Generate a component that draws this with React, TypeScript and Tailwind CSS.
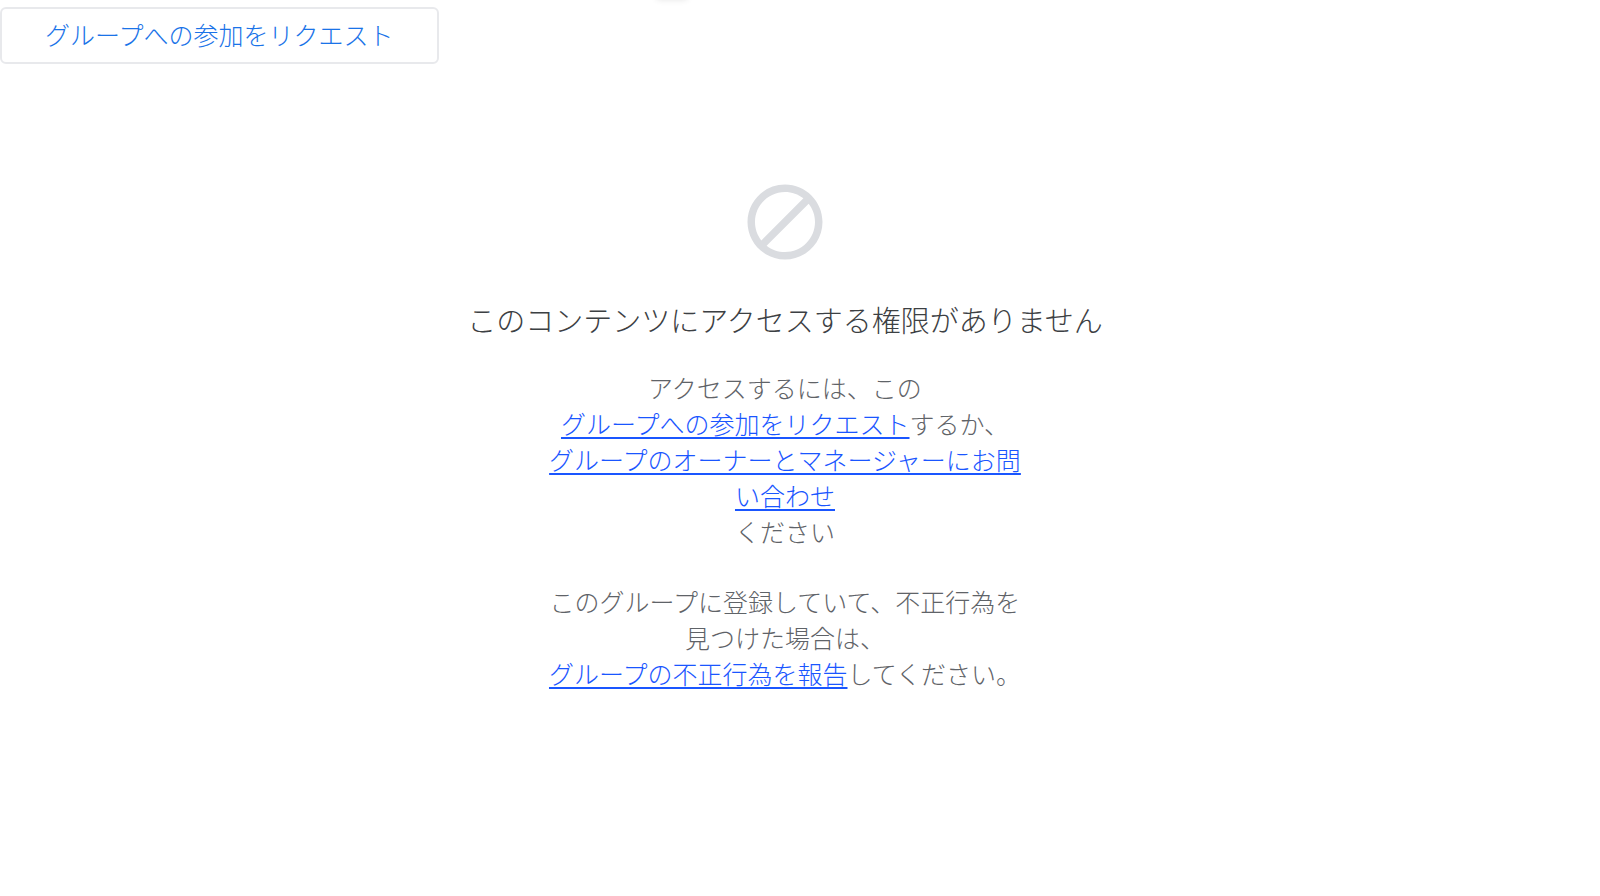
import type { ReactNode } from "react";

function BlockedIcon() {
  return (
    <svg
      width="90"
      height="90"
      viewBox="0 0 24 24"
      fill="#dadce0"
      aria-hidden="true"
    >
      <path d="M12 2C6.48 2 2 6.48 2 12s4.48 10 10 10 10-4.48 10-10S17.52 2 12 2zM4 12c0-4.42 3.58-8 8-8 1.85 0 3.55.63 4.9 1.69L5.69 16.9C4.63 15.55 4 13.85 4 12zm8 8c-1.85 0-3.55-.63-4.9-1.69L18.31 7.1C19.37 8.45 20 10.15 20 12c0 4.42-3.58 8-8 8z" />
    </svg>
  );
}

function TextLink({ href, children }: { href: string; children: ReactNode }) {
  return (
    <a
      href={href}
      className="inline-block text-[#1a56ff] underline decoration-2 underline-offset-3"
    >
      {children}
    </a>
  );
}

export default function App() {
  return (
    <div
      lang="ja"
      className="relative min-h-screen overflow-hidden bg-white pt-[7px] font-['Noto_Sans_CJK_JP',sans-serif] font-light"
    >
      <div className="absolute -top-2 left-[656px] h-2 w-8 rounded-full shadow-[0_0_6px_rgba(0,0,0,0.1)]" />

      <button
        type="button"
        className="h-[57px] rounded-md border-2 border-[#e8e9ec] px-[43px] pb-[3px] text-[25px] leading-9 text-[#1a73e8]"
      >
        グループへの参加をリクエスト
      </button>

      <main className="flex flex-col items-center pt-[113px] pr-[30px] text-center">
        <BlockedIcon />
        <h1 className="mt-8 text-[29px] leading-10 text-[#3c4043]">
          このコンテンツにアクセスする権限がありません
        </h1>
        <div className="mt-[30px] flex max-w-[484px] flex-col gap-[34px] text-[25px] leading-9 text-[#5f6368]">
          <p>
            アクセスするには、この
            <TextLink href="#join">グループへの参加をリクエスト</TextLink>
            するか、
            <TextLink href="#contact">
              グループのオーナーとマネージャーにお問い合わせ
            </TextLink>
            ください
          </p>
          <p>
            このグループに登録していて、不正行為を見つけた場合は、
            <TextLink href="#report">グループの不正行為を報告</TextLink>
            してください。
          </p>
        </div>
      </main>
    </div>
  );
}
